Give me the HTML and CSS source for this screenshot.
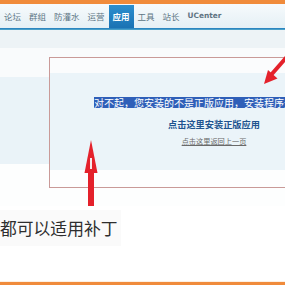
FILE: index.html
```html
<!DOCTYPE html>
<html>
<head>
<meta charset="utf-8">
<link rel="stylesheet" href="styles.css">
</head>
<body>
<div class="page">
  <div class="topbar"></div>
  <nav class="nav">
    <a class="nav-item">论坛</a>
    <a class="nav-item">群组</a>
    <a class="nav-item">防灌水</a>
    <a class="nav-item">运营</a>
    <a class="nav-item active">应用</a>
    <a class="nav-item">工具</a>
    <a class="nav-item">站长</a>
    <a class="nav-item latin">UCenter</a>
  </nav>
  <div class="navline"></div>
  <div class="shot">
    <div class="dialog">
      <div class="msg"><span class="sel">对不起，您安装的不是正版应用，安装程序无法继续。</span></div>
      <div class="link-main">点击这里安装正版应用</div>
      <div class="link-back"><span class="u">点击这里返回上一页</span></div>
    </div>
    <svg class="marks" viewBox="0 0 285 176" width="285" height="176">
      <line x1="271" y1="45" x2="292" y2="21" stroke="#e4212b" stroke-width="4"/>
      <polygon points="264,54 277.5,48.5 268,40" fill="#e4212b"/>
      <polygon points="91,110 97.5,143 84.5,143" fill="#e4212b"/>
      <rect x="90" y="128" width="2" height="11" fill="#f6e8ea"/>
      <rect x="88" y="141" width="6" height="35" fill="#e4212b"/>
    </svg>
  </div>
  <div class="caption">都可以适用补丁</div>
  <div class="footer"></div>
</div>
</body>
</html>
```
FILE: styles.css
```css
html, body {
  margin: 0;
  padding: 0;
  overflow: hidden;
  background: #fff;
}
.page {
  width: 285px;
  height: 285px;
  overflow: hidden;
  display: flex;
  flex-direction: column;
  background: #fff;
  font-family: "Noto Sans CJK SC", "Noto Sans", sans-serif;
}
.topbar {
  height: 4px;
  background: #f08b3b;
  flex: none;
}
.nav {
  height: 24px;
  flex: none;
  display: flex;
  align-items: stretch;
  background: linear-gradient(#f6fafc, #e5f0f5);
}
.nav-item {
  display: flex;
  align-items: center;
  padding: 0 4px;
  font-size: 8.5px;
  line-height: 1;
  color: #5d7584;
  white-space: nowrap;
}
.nav-item.latin {
  font-family: "DejaVu Sans", sans-serif;
  font-weight: bold;
  font-size: 7.4px;
  color: #5f7482;
}
.nav-item.active {
  margin-top: 1px;
  background: linear-gradient(#2c8fcf, #1a72b3);
  color: #fff;
  font-weight: bold;
}
.navline {
  height: 2px;
  flex: none;
  background: linear-gradient(#2c86c0 50%, #4aa0c8 50%);
}
.shot {
  position: relative;
  height: 176px;
  flex: none;
  overflow: hidden;
  background: linear-gradient(
    #edf3f6 0, #edf3f6 18px,
    #f9fbfc 18px, #f9fbfc 47px,
    #eaf3f8 47px, #eaf3f8 134px,
    #fdfefe 134px);
}
.dialog {
  box-sizing: border-box;
  width: 330px;
  height: 131px;
  margin: 27px 0 0 49px;
  padding-top: 39px;
  border: 1px solid #c99a98;
  text-align: center;
  background: linear-gradient(
    #fbfcfd 0, #fbfcfd 15px,
    #ebf4f9 15px, #ebf4f9 112px,
    #fdfefe 112px);
}
.msg {
  font-size: 10px;
  line-height: 11px;
  height: 11px;
  white-space: nowrap;
}
.sel {
  display: inline-block;
  vertical-align: top;
  line-height: 11px;
  color: #fff;
  background: #2f5fb8;
}
.link-main {
  margin-top: 10px;
  font-size: 9.2px;
  line-height: 12px;
  height: 12px;
  font-weight: bold;
  color: #20538f;
  white-space: nowrap;
}
.link-back {
  margin-top: 6px;
  font-size: 7.2px;
  line-height: 10px;
  height: 10px;
  color: #6a6a6a;
  white-space: nowrap;
}
.u {
  text-decoration: underline;
}
.marks {
  position: absolute;
  left: 0;
  top: 0;
}
.caption {
  margin-top: 4px;
  align-self: flex-start;
  padding: 8px 4px 8px 0;
  background: #fafafa;
  font-size: 16.8px;
  line-height: 20px;
  color: #2e2e2e;
  white-space: nowrap;
}
.footer {
  margin-top: auto;
  flex: none;
  height: 3px;
  border-top: 1px solid #fdf0e2;
  background: #f08b3b;
}
```
